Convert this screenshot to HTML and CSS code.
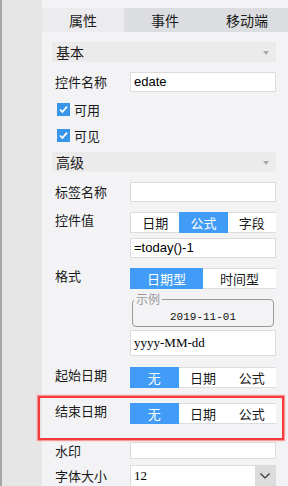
FILE: index.html
```html
<!DOCTYPE html>
<html lang="zh-CN">
<head>
    <meta charset="UTF-8">
    <meta name="viewport" content="width=device-width, initial-scale=1.0">
    <title>控件属性</title>
    <link rel="stylesheet" href="styles.css">
</head>
<body>
    <div class="side"></div>
    <div class="main">
        <!-- 顶部标签 -->
        <div class="tabs">
            <div class="tab on">属性</div>
            <div class="tab">事件</div>
            <div class="tab">移动端</div>
        </div>

        <div class="panel">
            <div class="group g-basic">基本<i class="caret"></i></div>

            <div class="row mid r-name">
                <span class="lbl">控件名称</span>
                <div class="field">edate</div>
            </div>

            <div class="check c-first">
                <span class="box"><svg width="13" height="13" viewBox="0 0 13 13"><path d="M3 6.5 L5.4 9 L10 3.6" fill="none" stroke="#fff" stroke-width="1.8"/></svg></span>可用
            </div>
            <div class="check">
                <span class="box"><svg width="13" height="13" viewBox="0 0 13 13"><path d="M3 6.5 L5.4 9 L10 3.6" fill="none" stroke="#fff" stroke-width="1.8"/></svg></span>可见
            </div>

            <div class="group g-adv">高级<i class="caret"></i></div>

            <div class="row mid r-tag">
                <span class="lbl">标签名称</span>
                <div class="field"></div>
            </div>

            <div class="row r-value">
                <span class="lbl">控件值</span>
                <div class="seg">
                    <span>日期</span><span class="on">公式</span><span>字段</span>
                </div>
            </div>
            <div class="row r-formula">
                <span class="lbl"></span>
                <div class="field">=today()-1</div>
            </div>

            <div class="row r-format">
                <span class="lbl">格式</span>
                <div class="seg two">
                    <span class="on">日期型</span><span>时间型</span>
                </div>
            </div>
            <div class="row r-sample">
                <span class="lbl"></span>
                <fieldset class="sample">
                    <legend>示例</legend>
                    <div class="date">2019-11-01</div>
                </fieldset>
            </div>
            <div class="row r-pattern">
                <span class="lbl"></span>
                <div class="field serif tall">yyyy-MM-dd</div>
            </div>

            <div class="row r-start">
                <span class="lbl">起始日期</span>
                <div class="seg">
                    <span class="on">无</span><span>日期</span><span>公式</span>
                </div>
            </div>

            <!-- 高亮的结束日期 -->
            <div class="row r-end mark">
                <span class="lbl">结束日期</span>
                <div class="seg">
                    <span class="on">无</span><span>日期</span><span>公式</span>
                </div>
            </div>

            <div class="row mid r-water">
                <span class="lbl">水印</span>
                <div class="field short"></div>
            </div>

            <div class="row mid r-font">
                <span class="lbl">字体大小</span>
                <div class="select">
                    <span class="val">12</span>
                    <span class="btn"><svg width="12" height="8" viewBox="0 0 12 8"><path d="M1.5 1.5 L6 6 L10.5 1.5" fill="none" stroke="#333" stroke-width="1.2"/></svg></span>
                </div>
            </div>
        </div>
    </div>
</body>
</html>
```
FILE: styles.css
```css
* { box-sizing: border-box;
}

body {
    margin: 0;
    display: flex;
    height: 486px;
    overflow: hidden;
    font-family: 'Noto Sans CJK SC', 'Liberation Sans', sans-serif;
    color: #1a1a1a;
    background: #f3f3f5;
}
.side {
    width: 42px;
    flex: none;
    background: #e6e6e6;
    border-left: 2px solid #a6a6a6;
}
.main {
    flex: 1;
    padding-top: 8px;
    background: #f3f3f5;
}
.tabs {
    display: flex;
    height: 24px;
}
.tab {
    flex: 1;
    display: flex;
    align-items: center;
    justify-content: center;
    font-size: 14px;
    background: #dcdde0;
}
.tab.on {
    background: #ececee;
}
.panel {
    padding: 0 12px 0 10px;
}
.group {
    position: relative;
    height: 20px;
    line-height: 20px;
    padding-left: 4px;
    font-size: 14px;
    background: #ebebeb;
}
.caret {
    position: absolute;
    right: 7px;
    top: 9px;
    border-left: 3px solid transparent;
    border-right: 3px solid transparent;
    border-top: 4px solid #a9a9a9;
}
.g-basic { margin-top: 10px; }
.g-adv { margin-top: 4px; }

.row {
    display: flex;
    align-items: flex-start;
}
.row.mid {
    align-items: center;
}
.lbl {
    width: 78px;
    flex: none;
    padding-left: 3px;
    font-size: 13px;
    line-height: 16px;
}
.field {
    width: 146px;
    height: 20px;
    line-height: 18px;
    padding-left: 3px;
    font-family: 'Liberation Sans', sans-serif;
    font-size: 13px;
    color: #000;
    background: #fff;
    border: 1px solid #dcdcdc;
}
.field.tall {
    height: 26px;
    line-height: 24px;
}
.field.short {
    height: 17px;
}
.serif {
    font-family: 'Liberation Serif', serif;
}
.check {
    display: flex;
    align-items: center;
    height: 26px;
    padding-left: 5px;
    font-size: 13px;
}
.c-first { margin-top: 4px; }
.box {
    width: 13px;
    height: 13px;
    margin-right: 4px;
    background: #3895ea;
}
.box svg { display: block; }

.seg {
    width: 146px;
    height: 21px;
    display: flex;
    background: #fff;
    border-top: 1px solid #dcdcdc;
    border-bottom: 1px solid #dcdcdc;
    border-left: 1px solid #dcdcdc;
}
.seg span {
    flex: 1;
    display: flex;
    align-items: center;
    justify-content: center;
    font-size: 13px;
    margin: -1px 0;
}
.seg span.on {
    color: #fff;
    background: #409cf6;
}
.seg span:first-child.on {
    margin-left: -1px;
}
.sample {
    width: 142px;
    height: 34px;
    margin: 0 0 0 2px;
    padding: 0;
    border: 1px solid #9a9a9a;
    border-radius: 4px;
}
.sample legend {
    margin-left: 1px;
    padding: 0 2px;
    font-size: 12px;
    line-height: 12px;
    color: #999;
}
.date {
    height: 26px;
    line-height: 24px;
    text-align: center;
    font-family: 'Liberation Mono', monospace;
    font-size: 11px;
    color: #111;
}
.select {
    width: 146px;
    height: 22px;
    display: flex;
    background: #fff;
    border: 1px solid #dcdcdc;
}
.val {
    flex: 1;
    padding-left: 3px;
    line-height: 20px;
    font-family: 'Liberation Serif', serif;
    font-size: 13px;
    color: #000;
}
.btn {
    width: 20px;
    display: flex;
    align-items: center;
    justify-content: center;
    background: #dcdcdc;
}

.r-name { margin-top: 10px; }
.r-tag { margin-top: 10px; }
.r-value { margin-top: 10px; }
.r-formula { margin-top: 5px; }
.r-format { margin-top: 10px; }
.r-sample { margin-top: 4px; }
.r-pattern { margin-top: 3px; }
.r-start { margin-top: 11px; }
.r-end { margin-top: 15px; }
.r-water { margin-top: 18px; }
.r-font { margin-top: 6px; }

.mark {
    position: relative;
}
.mark::after {
    content: "";
    position: absolute;
    left: -14px;
    right: -8px;
    top: -7px;
    bottom: -16px;
    border: 2px solid #f53b3b;
    box-shadow: 0 0 1px 1px rgba(255, 90, 90, 0.6);
    pointer-events: none;
}
```
